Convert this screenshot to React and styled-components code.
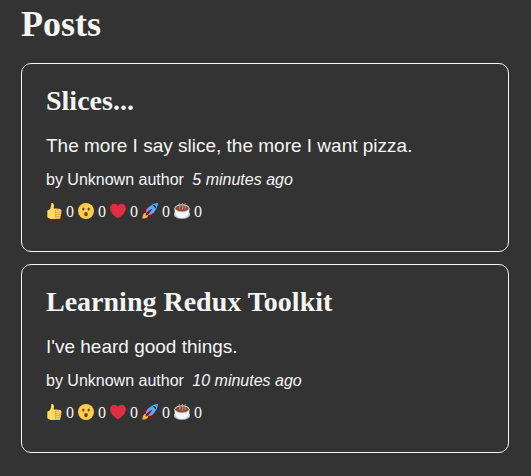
import React from "react";
import styled, { createGlobalStyle } from "styled-components";

const GlobalStyle = createGlobalStyle`
  * { box-sizing: border-box; }
  body { margin: 0; background: #333; color: whitesmoke; font-family: "Liberation Serif", serif; font-size: 16px; }
  h1, h2, p { margin: 0; }
`;

const Page = styled.main`
  padding: 2px 22px 22px 21px;
`;

const Title = styled.h1`
  margin-bottom: 17px;
  font-size: 36px;
  line-height: 44px;
`;

const List = styled.section`
  display: grid;
  gap: 12px;
`;

const Card = styled.article`
  border: 1px solid whitesmoke;
  border-radius: 10px;
  padding: 20px 24px;
`;

const Heading = styled.h2`
  margin-bottom: 12px;
  font-size: 28px;
  line-height: 34px;
`;

const Excerpt = styled.p`
  margin-bottom: 2px;
  font: 19px/32px "Liberation Sans", sans-serif;
`;

const Credit = styled.p`
  font: 16px/32px "Liberation Sans", sans-serif;
`;

const Time = styled.i`
  margin-left: 4px;
`;

const Reactions = styled.div`
  display: flex;
  align-items: center;
  gap: 4px;
  min-height: 32px;
  margin-bottom: 3px;
`;

const Reaction = styled.button`
  display: flex;
  align-items: flex-start;
  gap: 4px;
  border: 0;
  padding: 0;
  background: none;
  color: inherit;
  font: 16px/18px "Liberation Serif", serif;
  cursor: pointer;
`;

const Emoji = styled.svg`
  width: 16px;
  height: 16px;
`;

const reactions = [
  {
    name: "Thumbs up",
    art: (
      <>
        <path fill="#FFDB5E" d="M34.956 17.916c0-.503-.12-.975-.321-1.404-1.341-4.326-7.619-4.01-16.549-4.221-1.493-.035-.639-1.798-.115-5.668.341-2.517-1.282-6.382-4.01-6.382-4.498 0-.171 3.548-4.148 12.322-2.125 4.688-6.875 2.062-6.875 6.771v10.719c0 1.833.18 3.595 2.758 3.885C8.195 34.219 7.633 36 11.238 36h18.044c1.838 0 3.333-1.496 3.333-3.334 0-.762-.267-1.456-.698-2.018 1.02-.571 1.72-1.649 1.72-2.899 0-.76-.266-1.454-.696-2.015 1.023-.57 1.725-1.649 1.725-2.901 0-.909-.368-1.733-.961-2.336.757-.611 1.251-1.535 1.251-2.581z" />
        <path fill="#EE9547" d="M23.02 21.249h8.604c1.17 0 2.268-.626 2.866-1.633.246-.415.109-.952-.307-1.199-.415-.247-.952-.108-1.199.307-.283.479-.806.775-1.361.775h-8.81c-.873 0-1.583-.71-1.583-1.583s.71-1.583 1.583-1.583H28.7c.483 0 .875-.392.875-.875s-.392-.875-.875-.875h-5.888c-1.838 0-3.333 1.495-3.333 3.333 0 1.025.475 1.932 1.205 2.544-.615.605-.998 1.445-.998 2.373 0 1.028.478 1.938 1.212 2.549-.611.604-.99 1.441-.99 2.367 0 1.12.559 2.108 1.409 2.713-.524.589-.852 1.356-.852 2.204 0 1.838 1.495 3.333 3.333 3.333h5.484c1.17 0 2.269-.625 2.867-1.632.247-.415.11-.952-.305-1.199-.416-.245-.953-.11-1.199.305-.285.479-.808.776-1.363.776h-5.484c-.873 0-1.583-.71-1.583-1.583s.71-1.583 1.583-1.583h6.506c1.17 0 2.27-.626 2.867-1.633.247-.416.11-.953-.305-1.199-.419-.251-.954-.11-1.199.305-.289.487-.799.777-1.363.777h-7.063c-.873 0-1.583-.711-1.583-1.584s.71-1.583 1.583-1.583h8.091c1.17 0 2.269-.625 2.867-1.632.247-.415.11-.952-.305-1.199-.417-.246-.953-.11-1.199.305-.289.486-.799.776-1.363.776H23.02c-.873 0-1.583-.71-1.583-1.583s.71-1.584 1.583-1.584z" />
      </>
    ),
  },
  {
    name: "Wow",
    art: (
      <>
        <circle cx="18" cy="18" r="18" fill="#FFCC4D" />
        <ellipse cx="18" cy="25" rx="4" ry="5" fill="#664500" />
        <ellipse cx="12" cy="13.5" rx="2.5" ry="3.5" fill="#664500" />
        <ellipse cx="24" cy="13.5" rx="2.5" ry="3.5" fill="#664500" />
      </>
    ),
  },
  {
    name: "Heart",
    art: <path fill="#DD2E44" d="M35.885 11.833c0-5.45-4.418-9.868-9.867-9.868-3.308 0-6.227 1.633-8.018 4.129-1.791-2.496-4.71-4.129-8.017-4.129-5.45 0-9.868 4.417-9.868 9.868 0 .772.098 1.52.266 2.241C1.751 22.587 11.216 31.568 18 34.034c6.783-2.466 16.249-11.447 17.617-19.959.17-.721.268-1.469.268-2.242z" />,
  },
  {
    name: "Rocket",
    art: (
      <>
        <path fill="#A0041E" d="M1 17l8-7 16 1 1 16-7 8s.001-5.999-6-12-12-6-12-6z" />
        <path fill="#FFAC33" d="M.973 35s-.036-7.979 2.985-11S15 21.187 15 21.187 14.999 29 11.999 32c-3 3-11.026 3-11.026 3z" />
        <circle fill="#FFCC4D" cx="9" cy="27" r="4" />
        <path fill="#55ACEE" d="M35.999 0s-10 0-22 10c-6 5-6 14-4 16s11 2 16-4c10-12 10-22 10-22z" />
        <path d="M26.999 5c-1.623 0-3.013.971-3.641 2.36.502-.227 1.055-.36 1.641-.36 2.209 0 4 1.791 4 4 0 .586-.133 1.139-.359 1.64 1.389-.627 2.359-2.017 2.359-3.64 0-2.209-1.791-4-4-4z" />
        <path fill="#A0041E" d="M8 28s0-4 1-5 13.001-10.999 14-10-9.001 13-10.001 14S8 28 8 28z" />
      </>
    ),
  },
  {
    name: "Coffee",
    art: (
      <>
        <ellipse cx="18" cy="27" rx="18" ry="9" fill="#99AAB5" />
        <ellipse cx="18" cy="25" rx="18" ry="9" fill="#CCD6DD" />
        <path fill="#F5F8FA" d="M1 12c0 10 3 17 9 20 4 2 12 2 16 0 6-3 9-10 9-20z" />
        <ellipse cx="18" cy="12" rx="17" ry="9" fill="#CCD6DD" />
        <ellipse cx="18" cy="12" rx="15" ry="7" fill="#8A4B38" />
        <path fill="none" stroke="#D99E82" strokeWidth="2" strokeLinecap="round" d="M12 1c-3 4 4 5 1 11m6-12c-3 5 4 7 0 14m6-13c-3 4 3 5 0 11" />
      </>
    ),
  },
];

const posts = [
  { title: "Slices...", body: "The more I say slice, the more I want pizza.", age: "5 minutes ago" },
  { title: "Learning Redux Toolkit", body: "I've heard good things.", age: "10 minutes ago" },
];

export default function App() {
  return (
    <Page>
      <GlobalStyle />
      <Title>Posts</Title>
      <List>
        {posts.map((post) => (
          <Card key={post.title}>
            <Heading>{post.title}</Heading>
            <Excerpt>{post.body}</Excerpt>
            <Credit>by Unknown author <Time>{post.age}</Time></Credit>
            <Reactions>
              {reactions.map(({ name, art }) => (
                <Reaction key={name} type="button" aria-label={`${name}: 0`}>
                  <Emoji viewBox="0 0 36 36" aria-hidden="true">{art}</Emoji>
                  <span>0</span>
                </Reaction>
              ))}
            </Reactions>
          </Card>
        ))}
      </List>
    </Page>
  );
}
